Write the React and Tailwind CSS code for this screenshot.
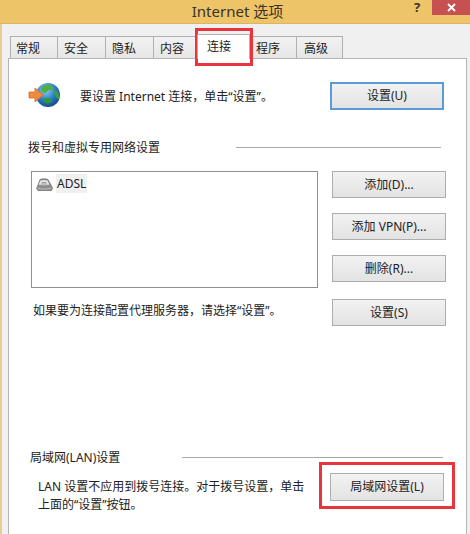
const tabs = [
  { label: '常规', width: 'w-[48px]' },
  { label: '安全', width: 'w-[49px]' },
  { label: '隐私', width: 'w-[49px]' },
  { label: '内容', width: 'w-[44px]' },
  { label: '连接', width: 'w-[53px]', active: true },
  { label: '程序', width: 'w-[48px]' },
  { label: '高级', width: 'w-[47px]' },
];

function Btn({ children, blue, className = '' }) {
  return (
    <div
      className={`flex h-[27px] w-[114px] items-center justify-center border bg-gradient-to-b from-[#f2f2f2] to-[#e3e3e3] text-[12px] text-[#222] ${
        blue ? 'border-[#5b9bd8]' : 'border-[#adadad]'
      } ${className}`}
    >
      {children}
    </div>
  );
}

function Globe() {
  return (
    <svg width="34" height="28" viewBox="0 0 34 28" className="block">
      <defs>
        <radialGradient id="sea" cx="0.4" cy="0.3" r="0.8">
          <stop offset="0" stopColor="#8fd0f5" />
          <stop offset="0.55" stopColor="#2878c0" />
          <stop offset="1" stopColor="#123f80" />
        </radialGradient>
      </defs>
      <circle cx="20" cy="13" r="12" fill="url(#sea)" />
      <path d="M14 5c3-3 9-3 11 0 1 2-2 3-4 3s-1 3-4 3-5-4-3-6z" fill="#4fae3c" />
      <path d="M15 17c3-2 7-1 9 1 1 2-3 4-6 3-2-1-4-3-3-4z" fill="#2f9a35" />
      <path d="M27 8c3 1 5 5 4 9-2 0-3-2-4-4s-1-4 0-5z" fill="#3aa23a" />
      <path d="M1 10h6V6l8 7-8 7v-4H1z" fill="#f08a3c" stroke="#d4692a" strokeWidth="0.8" />
    </svg>
  );
}

function Modem() {
  return (
    <svg width="17" height="14" viewBox="0 0 17 14" className="block">
      <path d="M4 1.5C6 .5 10 .5 12 1.5l3 5.5 1.5 3-1 2.5H2L.5 10.5 2 7z" fill="#8d8d8d" stroke="#5a5a5a" strokeWidth="0.6" />
      <path d="M4.5 2.5c2-.8 5-.8 7 0l2 4c-3 1-8 1-11 0z" fill="#e2e2e2" />
      <path d="M6 4.5h4M5 6h6" stroke="#8a8a8a" strokeWidth="0.8" />
      <path d="M1.5 10c4 1.5 10 1.5 14 0" stroke="#cfcfcf" strokeWidth="0.8" fill="none" />
    </svg>
  );
}

function Heading({ children, lineWidth, className = '' }) {
  return (
    <div className={`flex items-center justify-between ${className}`}>
      <span className="text-[12px] leading-[18px] text-[#222]">{children}</span>
      <div className={`mb-[2px] h-px bg-[#a9a9a9] ${lineWidth}`} />
    </div>
  );
}

export default function App() {
  return (
    <div className="relative h-[534px] w-[470px] overflow-hidden bg-[#f0f0f0] font-['Noto_Sans','Noto_Sans_CJK_SC',sans-serif]">
      {/* Title bar */}
      <div className="relative flex h-[24px] items-center justify-center border-b border-[#d9b565] bg-[#edc467] text-[15px] text-[#3a3326]">
        <span className="ml-[5px]">Internet 选项</span>
        <span className="absolute left-[414px] top-0 text-[13px] font-bold leading-[14px] text-[#333]">?</span>
        <div className="absolute left-[432px] top-0 flex h-[15px] w-[38px] items-center justify-center bg-[#c75050]">
          <svg width="9" height="9" viewBox="0 0 9 9">
            <path d="M1 1l7 7M8 1L1 8" stroke="#fff" strokeWidth="1.8" />
          </svg>
        </div>
      </div>

      <div className="flex h-[510px] border-l-2 border-[#e8cd91] pl-[6px] pr-[3px]">
        <div className="flex min-w-0 flex-1 flex-col">
          {/* Tabs */}
          <div className="flex h-[34px] items-end pl-[2px]">
            {tabs.map((t) => (
              <div
                key={t.label}
                className={`flex items-center border border-[#b0b0b0] text-[12px] text-[#222] ${t.width} ${
                  t.active
                    ? 'relative z-10 -mb-px h-[25px] border-b-0 bg-white pl-[9px]'
                    : 'h-[22px] border-b-0 bg-gradient-to-b from-[#f2f2f2] to-[#e6e6e6] pl-[6px] pt-[2px] -ml-px first:ml-0 first:pl-[5px] last:pl-[7px]'
                }`}
              >
                {t.label}
              </div>
            ))}
          </div>

          {/* Panel */}
          <div className="flex-1 border border-b-0 border-[#b5b5b5] bg-white pl-[19px] pr-[22px] pt-[23px]">
            <div className="flex items-center justify-between">
              <div className="flex items-center">
                <Globe />
                <span className="ml-[18px] pt-[1px] text-[12px] text-[#222]">要设置 Internet 连接，单击“设置”。</span>
              </div>
              <Btn blue className="h-[28px] border-2">设置(U)</Btn>
            </div>

            <Heading lineWidth="w-[205px]" className="mt-[29px] pr-[3px]">拨号和虚拟专用网络设置</Heading>

            <div className="mt-[14px] flex justify-between pl-[3px]">
              <div className="h-[117px] w-[287px] border border-[#8f8f8f] pl-[4px] pt-[3px]">
                <div className="flex items-center">
                  <Modem />
                  <span className="ml-[3px] -translate-y-px bg-[#f0f0f0] px-[1px] text-[12px] leading-[19px] text-[#222]">ADSL</span>
                </div>
              </div>
              <div className="-mr-[2px] flex flex-col gap-[15px]">
                <Btn>添加(D)...</Btn>
                <Btn>添加 VPN(P)...</Btn>
                <Btn>删除(R)...</Btn>
              </div>
            </div>

            <div className="mt-[11px] flex items-start justify-between pl-[5px]">
              <span className="mt-[3px] text-[12px] leading-[18px] text-[#222]">如果要为连接配置代理服务器，请选择“设置”。</span>
              <Btn className="-mr-[2px]">设置(S)</Btn>
            </div>

            <Heading lineWidth="w-[261px]" className="mt-[123px] pl-[2px] pr-[1px]">局域网(LAN)设置</Heading>

            <div className="mt-[6px] flex items-start justify-between pl-[10px]">
              <p className="w-[275px] pt-[5px] text-[12px] leading-[18px] text-[#222]">
                LAN 设置不应用到拨号连接。对于拨号设置，单击上面的“设置”按钮。
              </p>
              <Btn className="h-[28px]">局域网设置(L)</Btn>
            </div>
          </div>
        </div>
      </div>

      {/* Red highlight boxes */}
      <div className="absolute left-[195px] top-[28px] h-[38px] w-[58px] border-[3px] border-[#e8343c]" />
      <div className="absolute left-[319px] top-[462px] h-[47px] w-[136px] border-[3px] border-[#e8343c]" />
    </div>
  );
}
